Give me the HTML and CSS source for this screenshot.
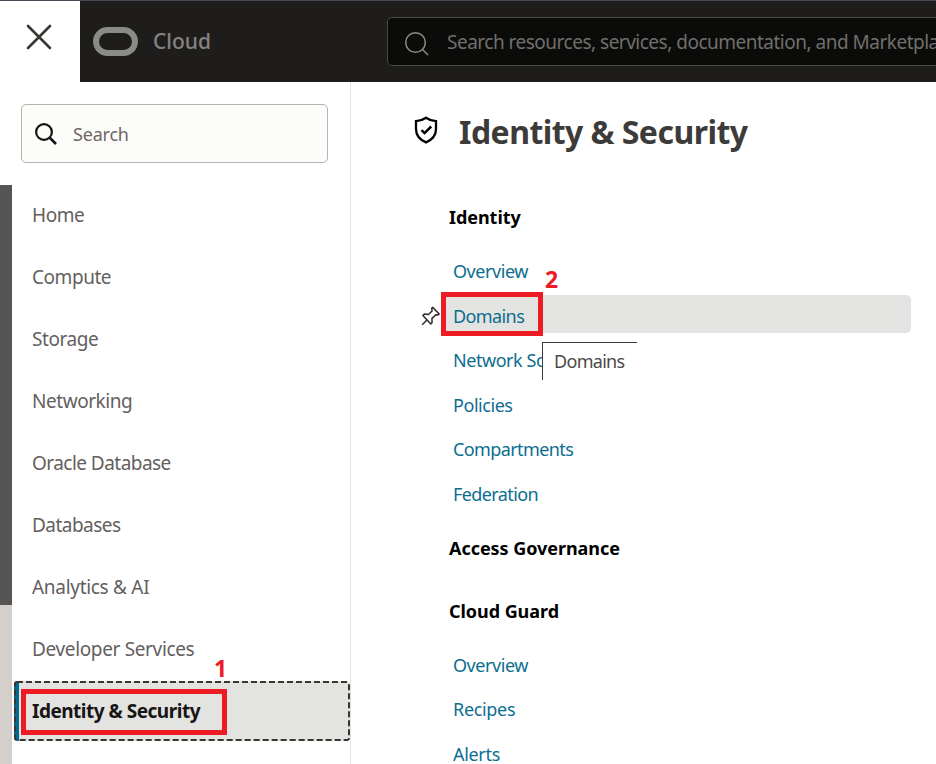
FILE: index.html
```html
<!DOCTYPE html>
<html lang="en">
<head>
<meta charset="utf-8">
<title>Identity &amp; Security - Cloud</title>
<link rel="stylesheet" href="styles.css">
</head>
<body>
<header class="topbar">
  <button class="close" aria-label="Close menu">
    <svg width="26" height="26" viewBox="0 0 26 26"><path d="M2 2 24 24M24 2 2 24" fill="none" stroke="#3a3631" stroke-width="2.6" stroke-linecap="round"/></svg>
  </button>
  <div class="brand">
    <span class="logo"></span>
    <span class="brand-name">Cloud</span>
  </div>
  <div class="global-search">
    <svg width="26" height="26" viewBox="0 0 26 26" fill="none" stroke="#8b8a88" stroke-width="1.5"><circle cx="11.5" cy="11.5" r="9.8"/><path d="M18.3 18.3 24 24"/></svg>
    <span class="global-text">Search resources, services, documentation, and Marketplace</span>
  </div>
</header>
<main class="layout">
  <aside class="sidebar">
    <div class="search">
      <svg width="24" height="24" viewBox="0 0 24 24" fill="none" stroke="#161513" stroke-width="2.2"><circle cx="10" cy="10" r="7.9"/><path d="M15.5 15.5 22 22" stroke-width="2.6"/></svg>
      <span class="search-text">Search</span>
    </div>
    <div class="side-body">
      <div class="backdrop"></div>
      <nav class="menu">
        <a class="item">Home</a>
        <a class="item">Compute</a>
        <a class="item">Storage</a>
        <a class="item">Networking</a>
        <a class="item oracle-db">Oracle Database</a>
        <a class="item oracle-db">Databases</a>
        <a class="item analytics">Analytics &amp; AI</a>
        <a class="item developer">Developer Services</a>
        <a class="item selected">Identity &amp; Security
          <svg class="focus" width="336" height="60"><rect x="1" y="1" width="334" height="58" rx="2" fill="none" stroke="#3a3631" stroke-width="2" stroke-dasharray="6 3"/></svg>
          <span class="mark mark-one"></span><b class="step step-one">1</b>
        </a>
      </nav>
    </div>
  </aside>
  <section class="content">
    <h1 class="title">
      <svg width="24" height="28" viewBox="0 0 24 28" fill="none" stroke="#000"><path d="M12 1.8Q16.5 5 22 5.2V13C22 19 18 23.8 12 26.4 6 23.8 2 19 2 13V5.2Q7.5 5 12 1.8Z" stroke-width="2.3"/><path d="M7.5 14.2 10.6 17.1 17.2 10.5" stroke-width="2.5"/></svg>
      <span>Identity &amp; Security</span>
    </h1>
    <h2 class="group">Identity</h2>
    <div class="links">
      <a class="link">Overview</a>
      <a class="link active"><span class="domains">Domains</span>
        <svg class="pin" width="20" height="20" viewBox="0 0 20 20" fill="none" stroke="#302d29" stroke-width="1.5" stroke-linejoin="round"><path d="M11.7 1.4 18.2 8 16.6 9 14.7 8.8 10.9 12.6 11.1 16.5 9.8 18 1.9 9.4 3.4 8.1 7.4 8.5 11.1 5 10.7 2.4ZM6.2 13.8 1.2 18.8"/></svg>
        <span class="mark mark-two"></span><b class="step step-two">2</b><span class="tooltip">Domains</span>
      </a>
      <a class="link">Network Sources</a>
      <a class="link">Policies</a>
      <a class="link long">Compartments</a>
      <a class="link long">Federation</a>
    </div>
    <h2 class="group access">Access Governance</h2>
    <h2 class="group guard">Cloud Guard</h2>
    <div class="links">
      <a class="link">Overview</a>
      <a class="link short">Recipes</a>
      <a class="link short">Alerts</a>
    </div>
  </section>
</main>
</body>
</html>
```
FILE: styles.css
```css
* { box-sizing: border-box; }
body {
  margin: 0;
  width: 936px;
  height: 764px;
  overflow: hidden;
  background: #fff;
  font-family: "Noto Sans", "Open Sans", sans-serif;
  font-size: 18px;
}
svg { flex: none; }
.topbar {
  display: flex;
  height: 82px;
  border-top: 1px solid #454a54;
  background: #1e1d1b;
  overflow: hidden;
}
.close {
  flex: none;
  width: 80px;
  padding: 23px 0 0 26px;
  border: 0;
  background: #fff;
  display: flex;
  align-items: flex-start;
}
.brand {
  flex: none;
  width: 307px;
  display: flex;
  align-items: center;
  padding: 0 0 1px 13px;
  gap: 15px;
}
.logo { width: 45px; height: 29px; border: 6px solid #8a8a89; border-radius: 15px; }
.brand-name { margin-top: -1px; font-size: 21px; font-weight: 500; color: #848382; }
.global-search {
  flex: none;
  width: 570px;
  height: 49px;
  margin-top: 16px;
  border: 1px solid #4a4947;
  border-radius: 5px;
  background: #0b0b09;
  display: flex;
  align-items: center;
  padding-left: 16px;
  color: #716f6d;
}
.global-search svg { margin-top: 4px; }
.global-text { margin: 1px 0 0 17px; font-size: 19px; letter-spacing: -0.5px; white-space: nowrap; }
.layout { display: flex; height: 682px; }
.sidebar {
  flex: none;
  width: 351px;
  border-right: 1px solid #e2e1df;
  padding-top: 22px;
}
.search {
  width: 307px;
  height: 59px;
  margin: 0 0 22px 21px;
  border: 1px solid #bbb3ab;
  border-radius: 5px;
  background: #fcfcfb;
  display: flex;
  align-items: center;
  gap: 15px;
  padding-left: 12px;
  letter-spacing: -0.2px;
  color: #6e6762;
}
.side-body { display: flex; height: 579px; }
.backdrop { width: 12px; background: linear-gradient(#565554 420px, #d4cfca 420px); }
.menu { display: flex; flex-direction: column; gap: 2px; padding-left: 2px; }
.item {
  flex: none;
  position: relative;
  width: 336px;
  height: 60px;
  padding-left: 18px;
  line-height: 60px;
  font-size: 19px;
  letter-spacing: -0.45px;
  color: #63605d;
  white-space: nowrap;
}
.oracle-db { letter-spacing: -0.54px; }
.analytics { letter-spacing: -0.3px; }
.developer { letter-spacing: -0.35px; }
.selected {
  background: linear-gradient(90deg, #006b8f 5px, #e3e3e1 5px);
  border-radius: 4px;
  color: #161513;
  font-weight: 700;
  letter-spacing: -0.5px;
}
.focus { position: absolute; left: 0; top: 0; }
.mark { position: absolute; border: 5px solid #ed1c24; }
.mark-one { left: 7px; top: 8px; width: 206px; height: 46px; }
.step { position: absolute; color: #ed1c24; font-family: "Noto Sans", sans-serif; font-size: 23px; line-height: 24px; font-weight: 700; letter-spacing: 0; }
.step-one { left: 200px; top: -25px; }
.content { flex: 1; padding: 28px 25px 0 63px; }
.title {
  display: flex;
  align-items: center;
  gap: 21px;
  height: 44px;
  margin: 0;
  font-size: 32px;
  line-height: 44px;
  letter-spacing: -0.55px;
  color: #3d3b39;
  white-space: nowrap;
}
.title svg { margin-bottom: 5px; }
.group {
  margin: 51px 0 21px 35px;
  height: 24px;
  font-size: 18px;
  line-height: 24px;
  letter-spacing: -0.05px;
  color: #000;
}
.access { margin: 25px 0 0 35px; }
.guard { margin-top: 39px; }
.links { display: flex; flex-direction: column; gap: 6.5px; padding-left: 27px; }
.link {
  position: relative;
  height: 38px;
  padding-left: 12px;
  line-height: 43px;
  letter-spacing: -0.45px;
  color: #0b6e91;
  white-space: nowrap;
}
.long { letter-spacing: -0.6px; }
.short { letter-spacing: -0.32px; }
.domains { letter-spacing: -0.6px; }
.active { background: #e3e3e1; border-radius: 5px; }
.pin { position: absolute; left: -20px; top: 11px; }
.mark-two { left: 0; top: -3px; width: 102px; height: 44px; }
.step-two { left: 104px; top: -28px; }
.tooltip {
  position: absolute;
  z-index: 1;
  left: 101px;
  top: 47px;
  width: 95px;
  height: 38px;
  border: solid #3a3838;
  border-width: 1px 0 0 1px;
  background: #fff;
  padding-left: 11px;
  line-height: 37px;
  letter-spacing: -0.7px;
  color: #4b4949;
}
```
